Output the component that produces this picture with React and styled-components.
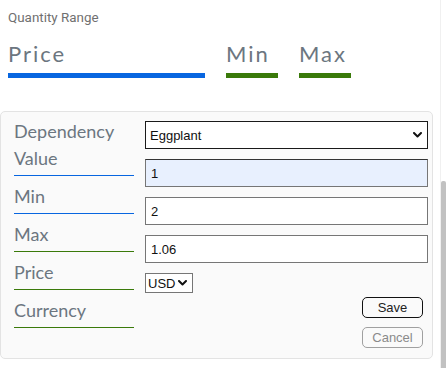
import React from "react";
import styled, { createGlobalStyle } from "styled-components";

const GlobalStyle = createGlobalStyle`
  body {
    margin: 0;
    background: #fff;
    font-family: "Lato", "Liberation Sans", sans-serif;
  }
`;

const Page = styled.div`
  display: flex;
  width: 446px;
  height: 368px;
  overflow: hidden;
`;

const Main = styled.div`
  width: 440px;
  flex-shrink: 0;
`;

const Track = styled.div`
  width: 6px;
  border-left: 1px solid #f0f0f0;
  box-sizing: border-box;
  padding-top: 181px;
  display: flex;
  justify-content: flex-end;
`;

const Thumb = styled.div`
  width: 5px;
  height: 200px;
  background: #c1c1c1;
  border-radius: 2px 2px 0 0;
`;

const Header = styled.div`
  padding: 10px 8px 0;
`;

const Caption = styled.div`
  font-family: "Roboto", "Liberation Sans", sans-serif;
  font-size: 13.4px;
  line-height: 16px;
  color: #707070;
`;

const Tabs = styled.div`
  display: flex;
  gap: 21px;
  margin-top: 14px;
`;

const Tab = styled.div`
  width: ${(p) => p.$w}px;
  font-size: 22px;
  line-height: 28px;
  letter-spacing: 2px;
  color: #6c7680;
  padding-bottom: 5px;
  border-bottom: 5px solid ${(p) => (p.$active ? "#0866e0" : "#3a7a0a")};
`;

const Panel = styled.div`
  margin-top: 33px;
  width: 433px;
  height: 248px;
  box-sizing: border-box;
  background: #fafafa;
  border: 1px solid #e3e3e3;
  border-radius: 5px;
  padding: 0 4px 10px 13px;
  display: flex;
  gap: 11px;
`;

const Labels = styled.div`
  width: 120px;
  flex-shrink: 0;
`;

const Label = styled.div`
  margin-top: 6px;
  font-size: 18px;
  line-height: 27px;
  color: #6c7680;
  padding-bottom: 3px;
  border-bottom: 1px solid ${(p) => (p.$blue ? "#0866e0" : "#3a7a0a")};
  & + & {
    margin-top: 7px;
  }
`;

const Controls = styled.div`
  flex: 1;
  padding-top: 9px;
  display: flex;
  flex-direction: column;
  align-items: flex-start;
`;

const fieldFont = `
  font-family: "Liberation Sans", Arial, sans-serif;
  font-size: 13px;
  color: #111;
  box-sizing: border-box;
`;

const SelectWrap = styled.div`
  position: relative;
  width: ${(p) => (p.$small ? "48px" : "100%")};
  margin-bottom: 10px;
`;

const Select = styled.select`
  ${fieldFont}
  appearance: none;
  display: block;
  width: 100%;
  height: ${(p) => (p.$small ? "20px" : "28px")};
  border: 1px solid ${(p) => (p.$small ? "#767676" : "#1a1a1a")};
  border-radius: 0;
  background: #fff;
  padding: 0 0 0 ${(p) => (p.$small ? "2px" : "4px")};
  margin: 0;
  outline: none;
`;

const Chevron = styled.svg`
  position: absolute;
  right: 6px;
  top: 50%;
  margin-top: -3px;
  pointer-events: none;
`;

const Input = styled.input`
  ${fieldFont}
  width: 100%;
  height: 28px;
  border: 1px solid #767676;
  border-top-color: ${(p) => (p.$filled ? "#333" : "#767676")};
  background: ${(p) => (p.$filled ? "#e8f0fe" : "#fff")};
  padding: 0 5px;
  margin: 0 0 10px;
  outline: none;
`;

const Buttons = styled.div`
  align-self: flex-end;
  margin-right: 5px;
  margin-top: -6px;
  display: flex;
  flex-direction: column;
  gap: 9px;
`;

const Button = styled.button`
  font-family: "Liberation Sans", Arial, sans-serif;
  font-size: 13px;
  width: 61px;
  height: 21px;
  padding: 0;
  border-radius: 5px;
  background: #fafafa;
  border: 1px solid ${(p) => (p.$muted ? "#a0a0a0" : "#111")};
  color: ${(p) => (p.$muted ? "#8a8a8a" : "#222")};
`;

function Dropdown({ small, value }) {
  return (
    <SelectWrap $small={small}>
      <Select $small={small} defaultValue={value}>
        <option>{value}</option>
      </Select>
      <Chevron width="9" height="6" viewBox="0 0 9 6">
        <polyline
          points="1,1 4.5,4.5 8,1"
          fill="none"
          stroke="#111"
          strokeWidth="2"
          strokeLinecap="round"
          strokeLinejoin="round"
        />
      </Chevron>
    </SelectWrap>
  );
}

export default function App() {
  return (
    <>
      <GlobalStyle />
      <Page>
        <Main>
          <Header>
            <Caption>Quantity Range</Caption>
            <Tabs>
              <Tab $active $w={197}>Price</Tab>
              <Tab $w={52}>Min</Tab>
              <Tab $w={52}>Max</Tab>
            </Tabs>
          </Header>
          <Panel>
            <Labels>
              <Label $blue>Dependency Value</Label>
              <Label $blue>Min</Label>
              <Label>Max</Label>
              <Label>Price</Label>
              <Label>Currency</Label>
            </Labels>
            <Controls>
              <Dropdown value="Eggplant" />
              <Input $filled defaultValue="1" />
              <Input defaultValue="2" />
              <Input defaultValue="1.06" />
              <Dropdown small value="USD" />
              <Buttons>
                <Button>Save</Button>
                <Button $muted>Cancel</Button>
              </Buttons>
            </Controls>
          </Panel>
        </Main>
        <Track>
          <Thumb />
        </Track>
      </Page>
    </>
  );
}
